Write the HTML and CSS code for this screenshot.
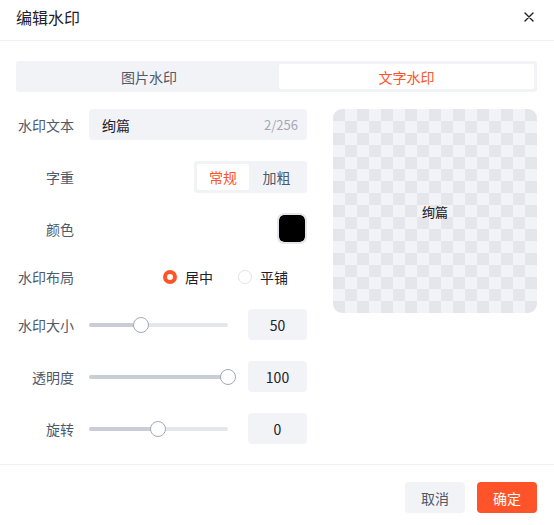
FILE: index.html
```html
<!DOCTYPE html>
<html lang="zh-CN">
<head>
<meta charset="utf-8">
<title>编辑水印</title>
<link rel="stylesheet" href="styles.css">
</head>
<body>
<div class="dialog">
  <div class="header">
    <div class="title">编辑水印</div>
    <svg class="close" width="10" height="10" viewBox="0 0 10 10"><path d="M1 1L9 9M9 1L1 9" stroke="#1d2129" stroke-width="1.4" stroke-linecap="round"/></svg>
  </div>
  <div class="body">
    <div class="tabs">
      <div class="tab">图片水印</div>
      <div class="tab active">文字水印</div>
    </div>
    <div class="content">
      <div class="form">
        <div class="row">
          <div class="label">水印文本</div>
          <div class="ctrl">
            <div class="input"><span class="val">绚篇</span><span class="count">2/256</span></div>
          </div>
        </div>
        <div class="row">
          <div class="label">字重</div>
          <div class="ctrl right">
            <div class="seg"><div class="seg-item on">常规</div><div class="seg-item">加粗</div></div>
          </div>
        </div>
        <div class="row">
          <div class="label">颜色</div>
          <div class="ctrl right">
            <div class="swatch"><div class="swatch-in"></div></div>
          </div>
        </div>
        <div class="row short">
          <div class="label">水印布局</div>
          <div class="ctrl right radios">
            <div class="radio"><span class="dot on"></span>居中</div>
            <div class="radio"><span class="dot"></span>平铺</div>
          </div>
        </div>
        <div class="row">
          <div class="label">水印大小</div>
          <div class="ctrl">
            <div class="slider"><div class="track"><div class="fill" style="width:37.4%"></div><div class="thumb" style="left:37.4%"></div></div></div>
            <div class="num">50</div>
          </div>
        </div>
        <div class="row">
          <div class="label">透明度</div>
          <div class="ctrl">
            <div class="slider"><div class="track"><div class="fill" style="width:100%"></div><div class="thumb" style="left:100%"></div></div></div>
            <div class="num">100</div>
          </div>
        </div>
        <div class="row">
          <div class="label">旋转</div>
          <div class="ctrl">
            <div class="slider"><div class="track"><div class="fill" style="width:49.6%"></div><div class="thumb" style="left:49.6%"></div></div></div>
            <div class="num">0</div>
          </div>
        </div>
      </div>
      <div class="preview"><span class="ptext">绚篇</span></div>
    </div>
  </div>
  <div class="footer">
    <div class="btn cancel">取消</div>
    <div class="btn ok">确定</div>
  </div>
</div>
</body>
</html>
```
FILE: styles.css
```css
* { box-sizing: border-box; }
html, body { margin: 0; padding: 0; background: #fff; }
body {
  font-family: "Noto Sans CJK SC", "Noto Sans", sans-serif;
  font-size: 14px;
  color: #1d2129;
}
.dialog { width: 554px; height: 525px; background: #fff; display: flex; flex-direction: column; }
.header {
  height: 41px;
  padding: 5px 20px 0 16px;
  display: flex;
  justify-content: space-between;
  align-items: flex-start;
  border-bottom: 1px solid #eff0f2;
}
.title { font-size: 16px; line-height: 24px; color: #1d2129; }
.close { margin-top: 7px; }
.body { padding: 20px 17px 0 16px; height: 424px; border-bottom: 1px solid #eff0f2; }
.tabs {
  height: 31px;
  background: #f2f3f7;
  border-radius: 3px;
  padding: 3px;
  display: flex;
}
.tab {
  flex: 1;
  display: flex;
  align-items: center;
  justify-content: center;
  color: #4e5969;
  line-height: 20px;
  border-radius: 2px;
}
.tab.active { background: #fff; color: #ff5329; flex: 0 0 255px; }
.content { display: flex; gap: 26px; margin-top: 17px; }
.form { width: 291px; display: flex; flex-direction: column; gap: 21px; }
.row { display: flex; align-items: center; height: 31px; gap: 15px; }
.row.short { height: 23px; }
.label { width: 58px; text-align: right; color: #4e5969; line-height: 20px; white-space: nowrap; }
.ctrl { flex: 1; display: flex; align-items: center; height: 100%; gap: 20px; }
.ctrl.right { justify-content: flex-end; }
.input {
  width: 100%;
  height: 31px;
  background: #f2f3f7;
  border-radius: 4px;
  display: flex;
  align-items: center;
  justify-content: space-between;
  padding: 0 9px 0 13px;
}
.val { color: #1d2129; }
.count { color: #a2a9b6; font-size: 13px; }
.seg {
  width: 113px;
  height: 32px;
  background: #f2f3f7;
  border-radius: 3px;
  padding: 3px;
  display: flex;
  gap: 0;
}
.seg-item {
  flex: 1;
  display: flex;
  align-items: center;
  justify-content: center;
  color: #4e5969;
  border-radius: 2px;
}
.seg-item.on { background: #fff; color: #ff5329; flex: 0 0 52px; }
.swatch {
  width: 30px;
  height: 31px;
  border: 2px solid #e5e6eb;
  border-radius: 7px;
  background: #fff;
  padding: 0;
  overflow: hidden;
}
.swatch-in { width: 100%; height: 100%; background: #000; border-radius: 5px; }
.radios { gap: 25px; padding-right: 19px; }
.radio { display: flex; align-items: center; gap: 8px; color: #1d2129; line-height: 20px; }
.dot {
  width: 14px; height: 14px; border-radius: 50%;
  border: 1.5px solid #e1e3e8;
  background: #fff;
  display: inline-block;
}
.dot.on { border: 4.5px solid #ff5329; }
.slider { width: 139px; height: 16px; display: flex; align-items: center; }
.track { position: relative; width: 100%; height: 4px; border-radius: 2px; background: #e5e6eb; }
.fill { height: 100%; border-radius: 2px; background: #c9ced6; }
.thumb {
  position: absolute;
  top: 50%;
  width: 16px; height: 16px;
  margin: -8px 0 0 -8px;
  border-radius: 50%;
  background: #fff;
  border: 1.5px solid #a3a9b5;
}
.num {
  width: 59px;
  height: 31px;
  background: #f2f3f7;
  border-radius: 4px;
  display: flex;
  align-items: center;
  justify-content: center;
  color: #1d2129;
}
.preview {
  width: 204px;
  height: 204px;
  border-radius: 9px;
  background-color: #f2f3f7;
  background-image: conic-gradient(transparent 25%, #e5e6eb 0 50%, transparent 0 75%, #e5e6eb 0);
  background-size: 24px 24px;
  display: flex;
  align-items: center;
  justify-content: center;
}
.ptext { font-size: 13px; color: #1d2129; }
.footer {
  flex: 1;
  display: flex;
  justify-content: flex-end;
  align-items: flex-start;
  padding: 17px 17px 0 0;
  gap: 12px;
}
.btn {
  width: 60px;
  height: 31px;
  border-radius: 4px;
  display: flex;
  align-items: center;
  justify-content: center;
  line-height: 20px;
}
.cancel { background: #f2f3f7; color: #4e5969; }
.ok { background: #ff5329; color: #fff; }
```
